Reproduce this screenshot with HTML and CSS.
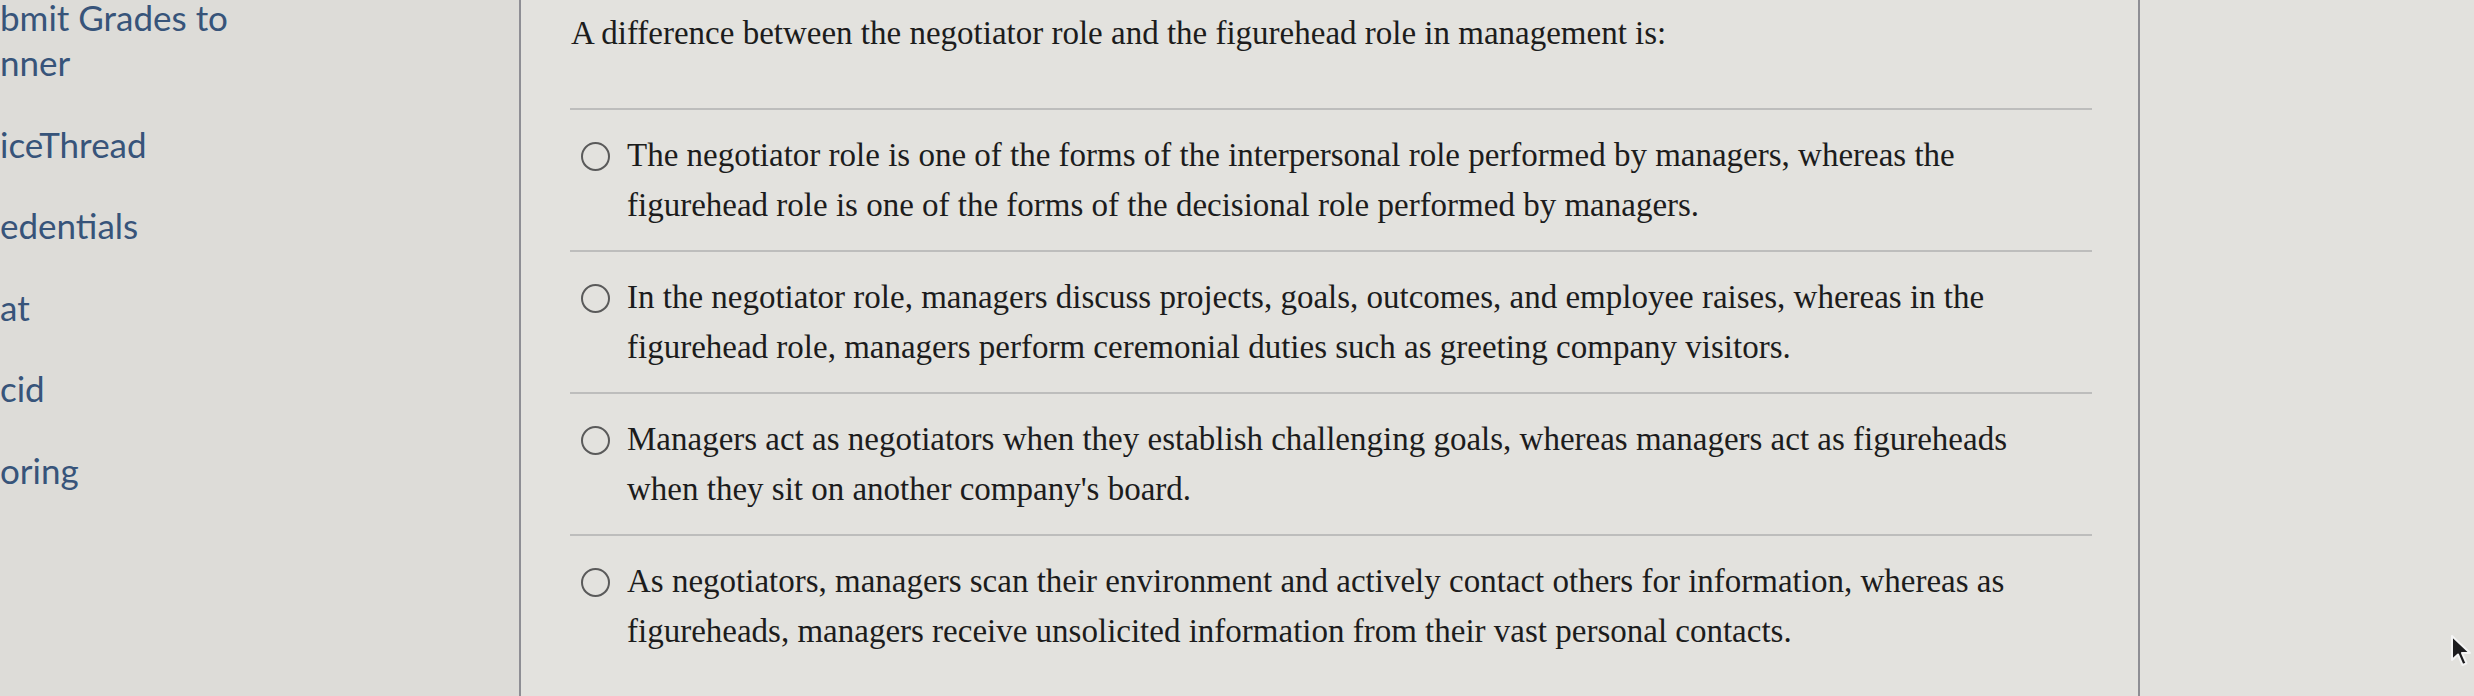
FILE: index.html
```html
<!DOCTYPE html>
<html lang="en">
<head>
<meta charset="utf-8">
<title>Quiz question</title>
<link rel="stylesheet" href="styles.css">
</head>
<body>
<div class="page">
  <nav class="course-nav">
    <a class="nav-item" href="#">bmit Grades to<br>nner</a>
    <a class="nav-item" href="#">iceThread</a>
    <a class="nav-item" href="#">edentials</a>
    <a class="nav-item" href="#">at</a>
    <a class="nav-item" href="#">cid</a>
    <a class="nav-item" href="#">oring</a>
  </nav>
  <main class="content">
    <div class="question">
      <p class="question-text">A difference between the negotiator role and the figurehead role in management is:</p>
      <ul class="answers">
        <li class="answer"><span class="radio"></span><span class="answer-text">The negotiator role is one of the forms of the interpersonal role performed by managers, whereas the<br>figurehead role is one of the forms of the decisional role performed by managers.</span></li>
        <li class="answer"><span class="radio"></span><span class="answer-text">In the negotiator role, managers discuss projects, goals, outcomes, and employee raises, whereas in the<br>figurehead role, managers perform ceremonial duties such as greeting company visitors.</span></li>
        <li class="answer"><span class="radio"></span><span class="answer-text">Managers act as negotiators when they establish challenging goals, whereas managers act as figureheads<br>when they sit on another company's board.</span></li>
        <li class="answer"><span class="radio"></span><span class="answer-text">As negotiators, managers scan their environment and actively contact others for information, whereas as<br>figureheads, managers receive unsolicited information from their vast personal contacts.</span></li>
      </ul>
    </div>
  </main>
  <aside class="side"></aside>
</div>
<svg class="cursor" width="22" height="34" viewBox="0 0 22 34" aria-hidden="true">
  <path d="M2 2 L2 26 L8 20.5 L12.5 31 L16.5 29.3 L12 19 L20 19 Z" fill="#1c1c1e" stroke="#f4f4f4" stroke-width="2" stroke-linejoin="round"/>
</svg>
</body>
</html>
```

FILE: styles.css
```css
html, body {
  margin: 0;
  padding: 0;
}

body {
  background: #e2e1dd;
  width: 2474px;
  height: 696px;
  overflow: hidden;
  position: relative;
}

.page {
  display: grid;
  grid-template-columns: 521px 1619px 1fr;
  height: 696px;
}

.course-nav {
  background: #dddcd8;
  border-right: 2px solid #8e8e94;
  display: flex;
  flex-direction: column;
  gap: 36.5px;
  margin-top: -5px;
  padding-top: 0;
  font-family: Lato, "Liberation Sans", sans-serif;
  font-size: 35px;
  line-height: 45px;
}

.nav-item {
  color: #37547a;
  text-decoration: none;
  white-space: nowrap;
}

.content {
  background: #e3e2de;
  border-right: 2px solid #8e8e94;
  padding: 8px 46px 0 49px;
}

.question {
  font-family: "Liberation Serif", "Times New Roman", serif;
  color: #1c1c1c;
}

.question-text {
  margin: 0 0 50px 1px;
  font-size: 33px;
  line-height: 50px;
}

.answers {
  list-style: none;
  margin: 0;
  padding: 0;
}

.answer {
  display: flex;
  align-items: flex-start;
  gap: 17px;
  border-top: 2px solid #bdbdbc;
  padding: 20px 0 20px 11px;
  font-size: 33px;
  line-height: 50px;
}

.radio {
  flex: none;
  width: 25px;
  height: 25px;
  border: 2.5px solid #5a5a5a;
  border-radius: 50%;
  margin-top: 12px;
}

.answer-text {
  white-space: nowrap;
}

.side {
  background: #e2e1dd;
}

.cursor {
  position: absolute;
  left: 2450px;
  top: 634px;
}
```
